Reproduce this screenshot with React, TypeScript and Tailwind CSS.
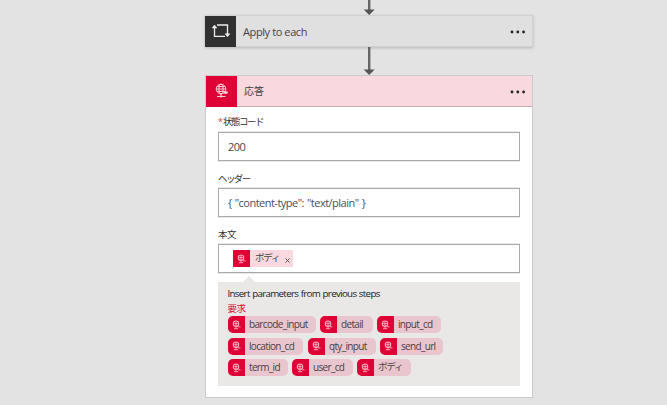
import React from "react";

function Globe({ size }: { size: number }) {
  return (
    <svg width={size} height={size} viewBox="0 0 16 16" fill="none" stroke="#ffd0da" strokeWidth="1">
      <circle cx="7" cy="6" r="4.8" />
      <ellipse cx="7" cy="6" rx="2.1" ry="4.8" />
      <path d="M2.2 6h9.6M3 3.6h8M3 8.4h8M7 11v3M3 13.5h8.5" />
      <path d="M5.6 13.5h2.8M9.8 9.6h4M11.8 8.2v2.8" strokeWidth="1.6" />
    </svg>
  );
}

function MiniGlobe() {
  return (
    <svg width="9" height="10" viewBox="0 0 9 10" fill="none" stroke="#fcb0c0" strokeWidth="1.1">
      <circle cx="4" cy="3.7" r="2.7" />
      <path d="M2.2 3.6h3.6M4 1.6v6.6M2 8.7h4.2M5.8 6.8h2.7" strokeWidth=".9" />
    </svg>
  );
}

function Arrow({ height }: { height: number }) {
  return (
    <svg className="block" width="12" height={height} viewBox={`0 0 12 ${height}`}>
      <path d={`M6.2 0V${height - 4}`} stroke="#666" strokeWidth="2.4" />
      <path d={`M.7 ${height - 5.5}h11L6.2 ${height}z`} fill="#555" />
    </svg>
  );
}

function Dots() {
  return (
    <svg width="16" height="4" viewBox="0 0 16 4" fill="#222">
      <circle cx="2" cy="2" r="1.4" />
      <circle cx="7.8" cy="2" r="1.4" />
      <circle cx="13.6" cy="2" r="1.4" />
    </svg>
  );
}

function Chip({ label, width, tracking = "text-[10px] tracking-[-0.66px]" }: { label: string; width: string; tracking?: string }) {
  return (
    <div className={`flex h-[17px] shrink-0 overflow-hidden rounded-[5px] bg-[#e9c6cd] ${width}`}>
      <div className="flex w-[17px] shrink-0 items-center justify-center bg-[#df0335]">
        <MiniGlobe />
      </div>
      <span className={`ml-[4.5px] whitespace-nowrap leading-[16px] text-[#4b3d43] ${tracking}`}>{label}</span>
    </div>
  );
}

const inputBox =
  "flex h-[29px] items-center border border-[#a9a9a9] bg-white text-[11px] text-[#444] shadow-[0_1px_0_#e8e8e8,0_-1px_0_#e8e8e8]";
const label = "flex h-3 items-center whitespace-nowrap text-[10px] text-[#333]";

export default function App() {
  return (
    <div className="flex h-[405px] w-[667px] flex-col overflow-hidden bg-[#e3e3e3] pl-[205px] font-['Open_Sans','Noto_Sans_CJK_JP',sans-serif]">
      <div className="flex h-[15px] w-[328px] shrink-0 justify-center">
        <Arrow height={15} />
      </div>
      <div className="flex h-8 w-[328px] shrink-0 items-center border border-[#d2d2d2] border-l-0 bg-[#e0e0e0] pr-[6px] shadow-[0_1px_3px_rgba(0,0,0,0.2)]">
        <div className="flex h-[31px] w-[31px] items-center justify-center bg-[#303030]">
          <svg width="20" height="16" viewBox="0 0 20 16" fill="none" stroke="#ececec" strokeWidth="1.3">
            <path d="M3.5 3V13.3H14M6 2H16.5V12.5" />
            <path d="M1.2 5L3.5 2L5.8 5zM14.2 10.8L16.5 13.8L18.8 10.8z" fill="#ececec" strokeWidth=".6" />
          </svg>
        </div>
        <span className="ml-[7px] flex-1 whitespace-nowrap pt-[2px] text-[11px] tracking-[-0.4px] text-[#444]">Apply to each</span>
        <div className="mt-[2px] flex">
          <Dots />
        </div>
      </div>
      <div className="flex h-7 w-[328px] shrink-0 justify-center">
        <Arrow height={28} />
      </div>
      <div className="h-[323px] w-[328px] shrink-0 border border-[#cbcbcb] bg-white">
        <div className="flex h-[31px] items-center border-b border-[#c9a9b0] bg-[#f9d9df] pr-[6px]">
          <div className="flex h-[31px] w-[31px] items-center justify-center bg-[#df0335]">
            <Globe size={16} />
          </div>
          <span className="ml-[7px] flex-1 pt-px text-[10px] text-[#444]">応答</span>
          <div className="mt-px flex">
            <Dots />
          </div>
        </div>
        <div className="px-3">
          <div className={`mt-[9px] ${label}`}>
            <span className="w-[5px] text-[9px] text-[#e23b32]">*</span>
            <span className="pt-px text-[9.5px] tracking-[-1.5px]">状態コード</span>
          </div>
          <div className={`mt-1 pl-[9px] ${inputBox}`}>
            <span className="pt-[2px] tracking-[-0.5px]">200</span>
          </div>
          <div className={`mt-3 ${label}`}>
            <span className="text-[9.5px] tracking-[-1.6px]">ヘッダー</span>
          </div>
          <div className={`mt-[3px] pl-[9px] ${inputBox}`}>
            <span className="whitespace-pre pt-[2px] tracking-[-0.52px] text-[#3f5060] [word-spacing:0.8px]">{'{ "content-type": "text/plain" }'}</span>
          </div>
          <div className={`mt-3 ${label}`}>
            <span className="text-[9.5px] tracking-[-0.5px]">本文</span>
          </div>
          <div className={`mt-[3px] pl-[14px] ${inputBox}`}>
            <div className="flex h-[17px] w-[60px] items-center bg-[#f9d9df]">
              <div className="flex h-[17px] w-[17px] items-center justify-center bg-[#df0335]">
                <MiniGlobe />
              </div>
              <span className="ml-[5px] flex-1 whitespace-nowrap text-[9.5px] tracking-[-1.2px]">ボディ</span>
              <svg className="mr-[3px] mt-1" width="5" height="5" viewBox="0 0 5 5" stroke="#555" strokeWidth="1">
                <path d="M.5.5l4 4M4.5.5l-4 4" />
              </svg>
            </div>
          </div>
          <svg className="ml-[25px] mt-[3px] block" width="12" height="6" viewBox="0 0 12 6">
            <path d="M0 6L6 0l6 6z" fill="#e9e8e7" />
          </svg>
          <div className="h-[104px] bg-[#e9e8e7] pl-[9.5px] pt-[5px]">
            <div className="h-[14px] whitespace-nowrap text-[9.75px] leading-[14px] tracking-[-0.68px] text-[#222] [word-spacing:0.6px]">
              Insert parameters from previous steps
            </div>
            <div className="h-[15px] text-[9.5px] leading-[15px] tracking-[-0.5px] text-[#df0335]">要求</div>
            <div className="flex flex-col gap-[4.6px]">
              <div className="flex gap-1">
                <Chip label="barcode_input" width="w-[88px]" />
                <Chip label="detail" width="w-[53px]" />
                <Chip label="input_cd" width="w-[64px]" />
              </div>
              <div className="flex gap-1">
                <Chip label="location_cd" width="w-[75px]" />
                <Chip label="qty_input" width="ml-px w-[68px]" />
                <Chip label="send_url" width="w-[63px]" />
              </div>
              <div className="flex gap-1">
                <Chip label="term_id" width="w-[60px]" />
                <Chip label="user_cd" width="w-[61px]" />
                <Chip label="ボディ" width="w-[54px]" tracking="text-[9.5px] tracking-[-1.2px]" />
              </div>
            </div>
          </div>
        </div>
      </div>
    </div>
  );
}
